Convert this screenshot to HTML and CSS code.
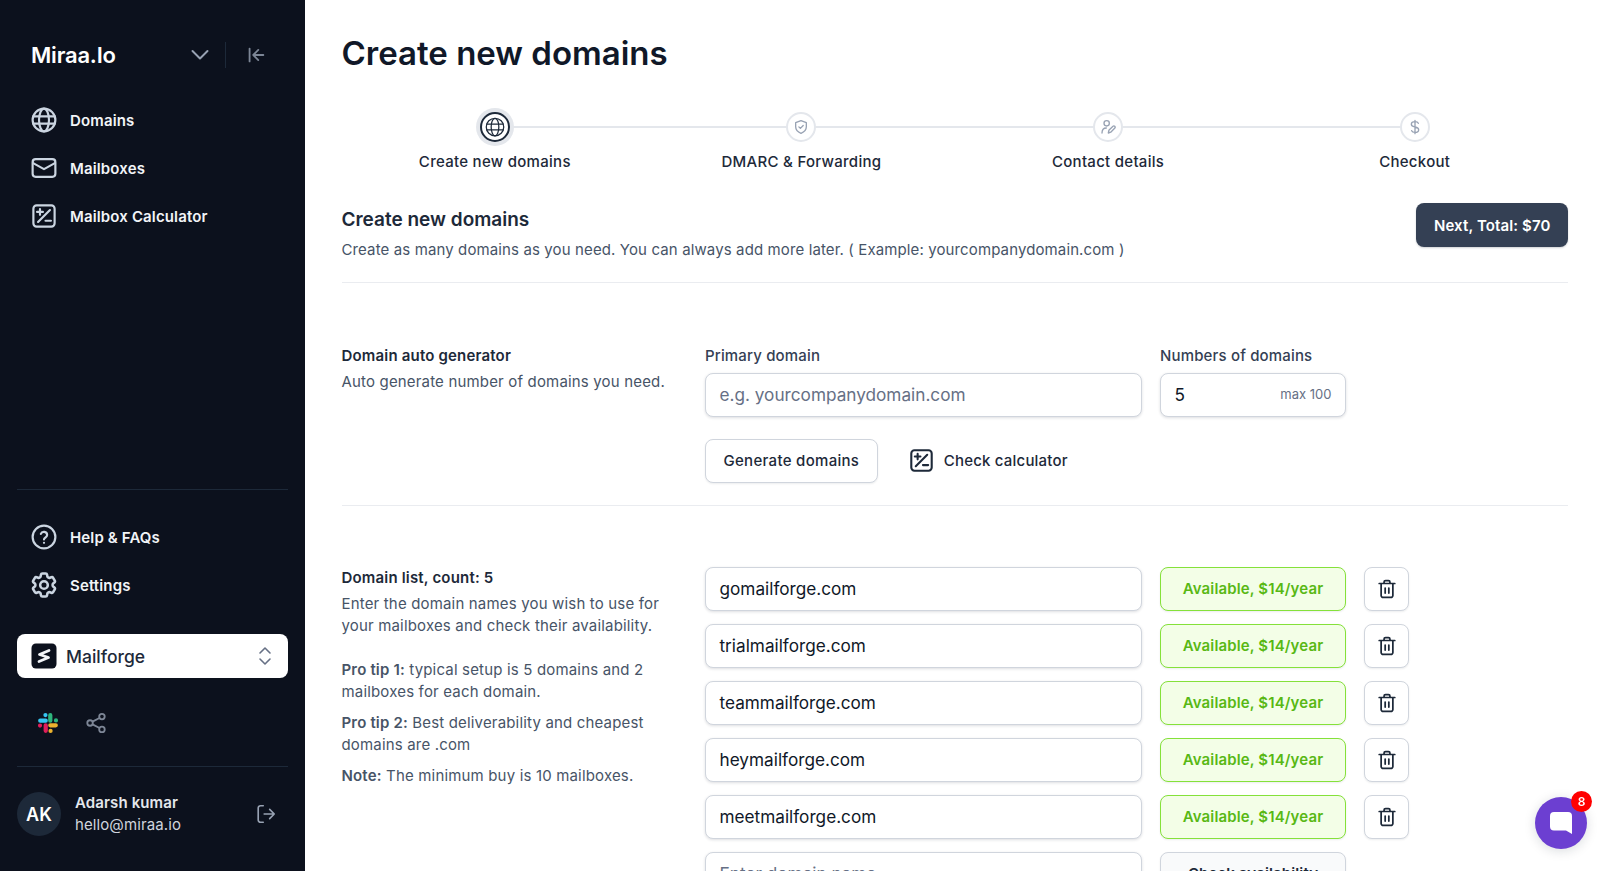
FILE: index.html
```html
<!DOCTYPE html>
<html lang="en">
<head>
<meta charset="utf-8">
<title>Create new domains</title>
<link rel="stylesheet" href="styles.css">
</head>
<body>
<svg class="defs" width="0" height="0" aria-hidden="true">
  <symbol id="i-globe" viewBox="0 0 24 24"><circle cx="12" cy="12" r="10.5"/><ellipse cx="12" cy="12" rx="4.6" ry="10.5"/><path d="M2 8.6h20M2 15.4h20"/></symbol>
  <symbol id="i-calc" viewBox="0 0 24 24"><rect x="2.2" y="2.2" width="19.6" height="19.6" rx="3"/><path d="M6.5 17.5 17.5 6.5M5.6 8.2h5.4M8.3 5.5v5.4M13.4 16.4h5"/></symbol>
  <symbol id="i-trash" viewBox="0 0 24 24"><path d="M3.5 6h17M8.8 6V4.4A1.6 1.6 0 0 1 10.4 2.8h3.2a1.6 1.6 0 0 1 1.6 1.6V6M5.6 6v13a2.2 2.2 0 0 0 2.2 2.2h8.4a2.2 2.2 0 0 0 2.2-2.2V6M10 11v5.4M14 11v5.4"/></symbol>
</svg>
<div class="app">
  <aside class="sidebar">
    <div class="brand">
      <span class="brand-name">Miraa.Io</span>
      <svg class="brand-chevron" viewBox="0 0 24 24"><path d="m4.5 8 7.5 7.5L19.500 8"/></svg>
      <span class="brand-sep"></span>
      <svg class="brand-collapse" viewBox="0 0 24 24"><path d="M5 5v14M20 12H9M14.500 6.500 9 12l5.500 5.500"/></svg>
    </div>
    <nav class="nav">
      <a class="nav-item"><svg class="nav-icon"><use href="#i-globe"/></svg>Domains</a>
      <a class="nav-item"><svg class="nav-icon" viewBox="0 0 24 24"><rect x="1.500" y="3.800" width="21" height="16.400" rx="2.800"/><path d="m2 7.500 10 5.500 10-5.500"/></svg>Mailboxes</a>
      <a class="nav-item"><svg class="nav-icon"><use href="#i-calc"/></svg>Mailbox Calculator</a>
    </nav>
    <div class="side-spacer"></div>
    <div class="side-rule"></div>
    <nav class="nav nav-lower">
      <a class="nav-item"><svg class="nav-icon" viewBox="0 0 24 24"><circle cx="12" cy="12" r="10.500"/><path d="M9.100 9.200a3 3 0 0 1 5.800 1c0 2-2.900 2.600-2.900 4M12 17.400h.01"/></svg>Help &amp; FAQs</a>
      <a class="nav-item"><svg class="nav-icon" viewBox="1.800 1.800 20.400 20.400"><path d="M9.594 3.94c.09-.542.56-.94 1.11-.94h2.593c.55 0 1.02.398 1.11.94l.213 1.281c.063.374.313.686.645.87.074.04.147.083.22.127.325.196.72.257 1.075.124l1.217-.456a1.125 1.125 0 0 1 1.37.49l1.296 2.247a1.125 1.125 0 0 1-.26 1.431l-1.003.827c-.293.241-.438.613-.43.992a7.723 7.723 0 0 1 0 .255c-.008.378.137.75.43.991l1.004.827c.424.35.534.955.26 1.43l-1.298 2.247a1.125 1.125 0 0 1-1.369.491l-1.217-.456c-.355-.133-.75-.072-1.076.124a6.47 6.47 0 0 1-.22.128c-.331.183-.581.495-.644.869l-.213 1.281c-.09.543-.56.94-1.11.94h-2.594c-.55 0-1.019-.398-1.11-.94l-.213-1.281c-.062-.374-.312-.686-.644-.87a6.52 6.52 0 0 1-.22-.127c-.325-.196-.72-.257-1.076-.124l-1.217.456a1.125 1.125 0 0 1-1.369-.49l-1.297-2.247a1.125 1.125 0 0 1 .26-1.431l1.004-.827c.292-.24.437-.613.43-.991a6.932 6.932 0 0 1 0-.255c.007-.38-.138-.751-.43-.992l-1.004-.827a1.125 1.125 0 0 1-.26-1.43l1.297-2.247a1.125 1.125 0 0 1 1.37-.491l1.216.456c.356.133.751.072 1.076-.124.072-.044.146-.086.22-.128.332-.183.582-.495.644-.869l.214-1.28Z"/><circle cx="12" cy="12" r="3"/></svg>Settings</a>
    </nav>
    <div class="workspace">
      <svg class="workspace-logo" viewBox="0 0 26 26"><rect x=".5" y=".5" width="25" height="25" rx="4.500" fill="#0c111d"/><path d="M18 7.500 8.500 11.500 17.500 14.500 8 18.500" fill="none" stroke="#f2f4f7" stroke-width="2.800" stroke-linecap="round" stroke-linejoin="round"/></svg>
      <span class="workspace-name">Mailforge</span>
      <svg class="workspace-caret" viewBox="0 0 16 24"><path d="m3 9 5-5 5 5M3 15l5 5 5-5"/></svg>
    </div>
    <div class="social">
      <svg class="slack" viewBox="0 0 24 24" fill="none" stroke-width="4.600" stroke-linecap="round">
        <path d="M9.500 9.500H3.500M9.200 3.300h.01" stroke="#36c5f0"/>
        <path d="M14.500 9.500V3.500M20.700 9.200v.01" stroke="#2eb67d"/>
        <path d="M14.500 14.500H20.500M14.800 20.700h.01" stroke="#ecb22e"/>
        <path d="M9.500 14.500V20.500M3.300 14.800v.01" stroke="#e01e5a"/>
      </svg>
      <svg class="share" viewBox="0 0 24 24"><circle cx="18.500" cy="5" r="3"/><circle cx="5.500" cy="12" r="3"/><circle cx="18.500" cy="19" r="3"/><path d="m8.200 10.500 7.600-4M8.200 13.500l7.600 4"/></svg>
    </div>
    <div class="side-rule"></div>
    <div class="user">
      <span class="avatar">AK</span>
      <div class="user-info">
        <div class="user-name">Adarsh kumar</div>
        <div class="user-mail">hello@miraa.io</div>
      </div>
      <svg class="logout" viewBox="0 0 24 24"><path d="M9 3H6a2.500 2.500 0 0 0-2.500 2.500v13A2.500 2.500 0 0 0 6 21h3M10 12h11M16 7l5 5-5 5"/></svg>
    </div>
  </aside>

  <main class="main">
    <h1 class="page-title">Create new domains</h1>

    <ol class="stepper">
      <li class="step step-active">
        <span class="step-dot"><svg class="step-icon"><use href="#i-globe"/></svg></span>
        <span class="step-label">Create new domains</span>
      </li>
      <li class="step">
        <span class="step-dot"><svg class="step-icon" viewBox="0 0 24 24"><path d="M12 2.500 20 5.500v6.200c0 4.800-3.400 8-8 9.800-4.600-1.800-8-5-8-9.800V5.500ZM8.800 11.800l2.300 2.300 4.200-4.300"/></svg></span>
        <span class="step-label">DMARC &amp; Forwarding</span>
      </li>
      <li class="step">
        <span class="step-dot"><svg class="step-icon" viewBox="0 0 24 24"><circle cx="10" cy="6.500" r="4"/><path d="M3 21c0-4.800 2.500-7.500 6.500-7.500M12.500 21l.8-4 6.200-6.200a2 2 0 0 1 2.800 2.800l-6.200 6.200Z"/></svg></span>
        <span class="step-label">Contact details</span>
      </li>
      <li class="step">
        <span class="step-dot"><svg class="step-icon" viewBox="0 0 24 24"><path d="M12 2v20M17 6.500c-.6-1.500-2.500-2.500-5-2.500-3 0-5.500 1.500-5.500 4s2.500 3.500 5.500 4 5.500 1.500 5.500 4-2.500 4-5.500 4c-2.500 0-4.400-1-5-2.500"/></svg></span>
        <span class="step-label">Checkout</span>
      </li>
    </ol>

    <header class="section-head">
      <div>
        <h2 class="section-title">Create new domains</h2>
        <p class="section-desc">Create as many domains as you need. You can always add more later. ( Example: yourcompanydomain.com )</p>
      </div>
      <button class="btn-primary">Next, Total: $70</button>
    </header>

    <section class="form-section form-gen">
      <div class="form-intro">
        <h3 class="form-title">Domain auto generator</h3>
        <p class="form-text">Auto generate number of domains you need.</p>
      </div>
      <div class="gen-fields">
        <div class="gen-grid">
          <div class="col">
            <div class="field-label">Primary domain</div>
            <div class="field field-placeholder">e.g. yourcompanydomain.com</div>
          </div>
          <div class="col">
            <div class="field-label">Numbers of domains</div>
            <div class="field field-count"><span>5</span><span class="field-hint">max 100</span></div>
          </div>
        </div>
        <div class="gen-actions">
          <button class="btn-outline">Generate domains</button>
          <a class="btn-link"><svg class="link-icon"><use href="#i-calc"/></svg>Check calculator</a>
        </div>
      </div>
    </section>

    <section class="form-section form-list">
      <div class="form-intro list-intro">
        <h3 class="form-title">Domain list, count: 5</h3>
        <p class="form-text">Enter the domain names you wish to use for your mailboxes and check their availability.</p>
        <p class="form-text tip tip-first"><b>Pro tip 1:</b> typical setup is 5 domains and 2 mailboxes for each domain.</p>
        <p class="form-text tip"><b>Pro tip 2:</b> Best deliverability and cheapest domains are .com</p>
        <p class="form-text tip"><b>Note:</b> The minimum buy is 10 mailboxes.</p>
      </div>
      <div class="domain-rows">
        <div class="field">gomailforge.com</div><div class="status">Available, $14/year</div><button class="btn-icon"><svg class="trash"><use href="#i-trash"/></svg></button>
        <div class="field">trialmailforge.com</div><div class="status">Available, $14/year</div><button class="btn-icon"><svg class="trash"><use href="#i-trash"/></svg></button>
        <div class="field">teammailforge.com</div><div class="status">Available, $14/year</div><button class="btn-icon"><svg class="trash"><use href="#i-trash"/></svg></button>
        <div class="field">heymailforge.com</div><div class="status">Available, $14/year</div><button class="btn-icon"><svg class="trash"><use href="#i-trash"/></svg></button>
        <div class="field">meetmailforge.com</div><div class="status">Available, $14/year</div><button class="btn-icon"><svg class="trash"><use href="#i-trash"/></svg></button>
        <div class="field field-placeholder">Enter domain name</div><div class="status status-check">Check availability</div>
      </div>
    </section>
  </main>
</div>

<button class="chat">
  <svg class="chat-icon" viewBox="0 0 24 24"><path d="M5 1h14a4 4 0 0 1 4 4v18l-6-3.500H5a4 4 0 0 1-4-4V5a4 4 0 0 1 4-4Z"/></svg>
  <span class="chat-badge">8</span>
</button>
</body>
</html>
```

FILE: styles.css
```css
* { box-sizing: border-box; }
html, body { margin: 0; height: 100%; overflow: hidden; }
body { font-family: Inter, "Liberation Sans", sans-serif; background: #fff; color: #101828; }
.defs { position: absolute; }
svg { display: block; flex: none; }
symbol, .nav-icon, .step-icon, .link-icon, .trash { fill: none; stroke-linecap: round; stroke-linejoin: round; }
h1, h2, h3, p, ol { margin: 0; padding: 0; }
button { font-family: inherit; cursor: pointer; }

.app { display: flex; height: 871px; }

/* sidebar */
.sidebar { width: 305px; flex: none; background: #0c111d; display: flex; flex-direction: column; padding: 31px 17px 35px; }
.brand { display: flex; align-items: center; height: 48px; padding-left: 14px; }
.brand-name { color: #fff; font-size: 22px; font-weight: 600; flex: 1; letter-spacing: -0.2px; }
.brand-chevron { width: 24px; height: 24px; fill: none; stroke: #98a2b3; stroke-width: 2; stroke-linecap: round; stroke-linejoin: round; }
.brand-sep { width: 1px; height: 26px; background: #1d2939; margin: 0 19px 0 13px; }
.brand-collapse { width: 22px; height: 22px; fill: none; stroke: #7d8696; stroke-width: 2; stroke-linecap: round; stroke-linejoin: round; margin-right: 21px; }
.nav { margin-top: 17px; }
.nav-item { display: flex; align-items: center; gap: 13px; height: 48px; padding-left: 14px; color: #f2f4f7; font-size: 15px; font-weight: 600; letter-spacing: .14px; }
.nav-icon { width: 26px; height: 26px; stroke: #cbd5e1; stroke-width: 2; }
.side-spacer { flex: 1; }
.side-rule { height: 1px; background: #1d2939; flex: none; }
.nav-lower { margin-top: 23px; }
.workspace { display: flex; align-items: center; height: 44px; margin-top: 25px; padding: 0 15px 0 14px; background: #fff; border-radius: 8px; }
.workspace-logo { width: 26px; height: 26px; }
.workspace-name { flex: 1; margin-left: 9px; font-size: 17.500px; font-weight: 500; color: #1d2939; }
.workspace-caret { width: 16px; height: 24px; fill: none; stroke: #667085; stroke-width: 1.600; stroke-linecap: round; stroke-linejoin: round; }
.social { display: flex; align-items: center; gap: 26px; height: 28px; margin: 31px 0 29px; padding-left: 20px; }
.slack { width: 22px; height: 22px; }
.share { width: 22px; height: 22px; fill: none; stroke: #7d8696; stroke-width: 2; }
.user { display: flex; align-items: center; gap: 13px; height: 44px; margin-top: 25px; }
.avatar { width: 44px; height: 44px; border-radius: 50%; background: #1d2939; color: #fff; display: flex; align-items: center; justify-content: center; font-size: 18px; font-weight: 600; flex: none; }
.user-info { flex: 1; padding-left: 1px; }
.user-name { color: #e4e7ec; font-size: 15px; font-weight: 600; line-height: 22px; letter-spacing: .12px; }
.user-mail { color: #d0d5dd; font-size: 15px; line-height: 22px; letter-spacing: .1px; }
.logout { width: 22px; height: 22px; fill: none; stroke: #98a2b3; stroke-width: 1.800; stroke-linecap: round; stroke-linejoin: round; margin-right: 11px; }

/* main */
.main { flex: 1; min-width: 0; padding: 33px 32px 0 36.500px; }
.page-title { font-size: 33px; font-weight: 600; line-height: 40px; color: #101828; }

.stepper { list-style: none; display: grid; grid-template-columns: repeat(4, 1fr); margin-top: 39px; }
.step { position: relative; display: flex; flex-direction: column; align-items: center; gap: 10px; }
.step:not(:last-child)::after { content: ""; position: absolute; left: 50%; width: 100%; top: 14px; height: 2px; background: #e4e7ec; }
.step-dot { position: relative; z-index: 1; width: 30px; height: 30px; border-radius: 50%; background: #fff; border: 2px solid #e4e7ec; display: flex; align-items: center; justify-content: center; }
.step-icon { width: 16px; height: 16px; stroke: #98a2b3; stroke-width: 2; }
.step-active .step-dot { border-color: #1d2939; box-shadow: 0 0 0 4px #e4e7ec; }
.step-active .step-icon { width: 20px; height: 20px; stroke: #1d2939; stroke-width: 1.500; }
.step-label { font-size: 15px; font-weight: 500; line-height: 20px; color: #1d2939; letter-spacing: .28px; }

.section-head { display: flex; justify-content: space-between; align-items: flex-start; margin-top: 31px; border-bottom: 1px solid #eaecf0; height: 80px; }
.section-title { font-size: 19px; font-weight: 600; line-height: 24px; margin-top: 5px; color: #1d2939; }
.section-desc { font-size: 15px; line-height: 20px; color: #475467; margin-top: 8px; letter-spacing: .12px; }
.btn-primary { height: 44px; padding: 0 17.500px; border: 0; border-radius: 8px; background: #344054; color: #fff; font-size: 15px; font-weight: 600; letter-spacing: .12px; box-shadow: 0 1px 2px rgba(16, 24, 40, .2); }

.form-section { display: grid; grid-template-columns: 345.500px 1fr; column-gap: 18px; }
.form-gen { padding: 63px 0 22px; border-bottom: 1px solid #eaecf0; }
.form-list { padding-top: 61px; }
.form-title { font-size: 15px; font-weight: 600; line-height: 20px; color: #1d2939; letter-spacing: .18px; }
.form-text { font-size: 15px; line-height: 22px; color: #475467; margin-top: 5px; letter-spacing: .17px; }
.form-text b { font-weight: 600; }
.list-intro { padding-top: 1px; }
.tip { margin-top: 9px; }
.tip-first { margin-top: 22px; }
.gen-grid { display: grid; grid-template-columns: 437px 186px; column-gap: 18px; }
.field-label { font-size: 15px; font-weight: 500; line-height: 20px; color: #344054; margin-bottom: 7px; letter-spacing: .16px; }
.field { height: 44px; border: 1px solid #d0d5dd; border-radius: 8px; background: #fff; box-shadow: 0 1px 3px rgba(16, 24, 40, .14); padding: 0 13.500px 2px; display: flex; align-items: center; font-size: 17.200px; color: #101828; }
.field-placeholder { color: #667085; }
.field-count { justify-content: space-between; }
.field-hint { font-size: 13px; color: #667085; }
.gen-actions { display: flex; align-items: center; gap: 31px; margin-top: 22px; }
.btn-outline { height: 44px; padding: 0 17.500px 2px; border: 1px solid #d0d5dd; border-radius: 8px; background: #fff; box-shadow: 0 1px 2px rgba(16, 24, 40, .08); color: #1d2939; font-size: 15px; font-weight: 500; letter-spacing: .3px; }
.btn-link { display: flex; align-items: center; gap: 10px; padding-bottom: 1px; color: #1d2939; font-size: 15px; font-weight: 500; letter-spacing: .2px; }
.link-icon { width: 25px; height: 25px; stroke: #1d2939; stroke-width: 2; }
.domain-rows { display: grid; grid-template-columns: 437px 186px 45px; gap: 13px 18px; align-items: stretch; }
.status { height: 44px; padding-bottom: 2px; border: 1px solid #85e13a; border-radius: 8px; background: #f3fee7; box-shadow: 0 1px 2px rgba(16, 24, 40, .08); display: flex; align-items: center; justify-content: center; color: #58b814; font-size: 15px; font-weight: 600; letter-spacing: .13px; }
.status-check { border-color: #d0d5dd; background: #f9fafb; color: #1d2939; }
.btn-icon { height: 44px; width: 45px; padding: 0; border: 1px solid #d0d5dd; border-radius: 8px; background: #fff; box-shadow: 0 1px 2px rgba(16, 24, 40, .08); display: flex; align-items: center; justify-content: center; }
.trash { width: 22px; height: 22px; stroke: #1d2939; stroke-width: 1.900; }

/* chat launcher */
.chat { position: fixed; left: 1535px; top: 797px; width: 52px; height: 52px; padding: 0; border: 0; border-radius: 50%; background: #6c3fd1; box-shadow: 0 2px 12px rgba(16, 24, 40, .15); display: flex; align-items: center; justify-content: center; }
.chat-icon { width: 24px; height: 24px; fill: #fff; }
.chat-badge { position: absolute; top: -6px; right: -5px; width: 21px; height: 21px; border-radius: 50%; background: #f00; color: #fff; font-size: 12px; font-weight: 600; display: flex; align-items: center; justify-content: center; }
```
